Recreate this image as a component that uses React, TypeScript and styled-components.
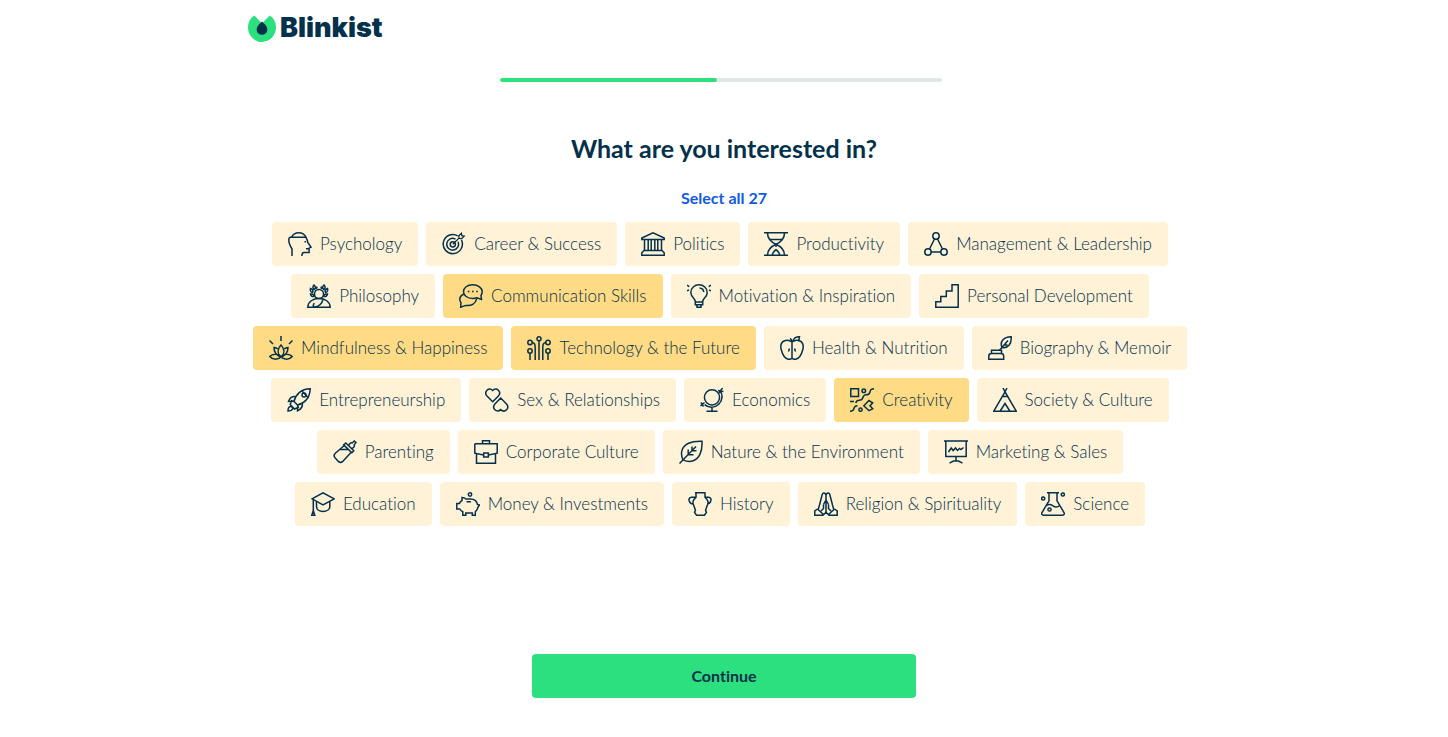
import React, { useState } from "react";
import styled, { createGlobalStyle } from "styled-components";

const ink = "#03314b";

const GlobalStyle = createGlobalStyle`
  *, *::before, *::after { box-sizing: border-box; }
  body {
    margin: 0;
    background: #fff;
    color: ${ink};
    font-family: Lato, "Liberation Sans", sans-serif;
    font-variant-ligatures: none;
  }
  button { font-family: inherit; font-variant-ligatures: inherit; cursor: pointer; }
`;

const Page = styled.div`
  width: 100%;
  max-width: 952px;
  margin: 0 auto;
`;

const Header = styled.header`
  display: flex;
  align-items: center;
  height: 56px;
`;

const Brand = styled.a`
  display: flex;
  align-items: center;
  gap: 4px;
  color: ${ink};
  font-family: Inter, Lato, sans-serif;
  font-size: 27px;
  line-height: 32px;
  font-weight: 900;
  text-decoration: none;
`;

const Main = styled.main`
  display: flex;
  flex-direction: column;
  align-items: center;
  padding-top: 22px;
`;

const ProgressSlot = styled.div`
  width: 100%;
  max-width: 448px;
  padding-right: 6px;
`;

const Track = styled.div`
  height: 4px;
  border-radius: 2px;
  background: #e1e6e9;
  overflow: hidden;
`;

const Fill = styled.div`
  height: 100%;
  border-radius: 2px;
  background: #2ce080;
`;

const Title = styled.h1`
  margin: 50px 0 0;
  font-size: 25px;
  line-height: 32px;
  font-weight: 700;
  text-align: center;
`;

const SelectAll = styled.button`
  margin-top: 24px;
  padding: 0;
  border: 0;
  background: none;
  color: #0f5be0;
  font-size: 16px;
  line-height: 20px;
  font-weight: 700;
`;

const Chips = styled.div`
  display: flex;
  flex-direction: column;
  gap: 8px;
  width: 100%;
  padding-right: 8px;
  margin-top: 14px;
`;

const ChipRow = styled.div`
  display: flex;
  flex-wrap: wrap;
  justify-content: center;
  gap: 8px;
`;

const Chip = styled.button<{ $selected: boolean }>`
  display: flex;
  align-items: center;
  gap: 8px;
  height: 44px;
  padding: 0 16px;
  border: 0;
  border-radius: 4px;
  background: ${(p) => (p.$selected ? "#ffdb85" : "#fff2d7")};
  color: ${ink};
  font-size: 17px;
  line-height: 24px;
  font-weight: 300;
  white-space: nowrap;
`;

const Glyph = styled.svg`
  flex: none;
  width: 24px;
  height: 24px;
  fill: none;
  stroke: ${ink};
  stroke-width: 1.5;
`;

const Continue = styled.button`
  width: 100%;
  max-width: 384px;
  height: 44px;
  margin: 128px 0 32px;
  border: 0;
  border-radius: 4px;
  background: #2ce080;
  color: ${ink};
  font-size: 16px;
  line-height: 24px;
  font-weight: 700;
`;

type Topic = { name: string; icon: React.ReactNode };

const rows: Topic[][] = [
  [
    {
      name: "Psychology",
      icon: (
        <>
          <path d="M4 24v-7C1.8 13.500.8 11 .8 8.300.8 6.500 1.300 5.300 2.500 5.300H18c1.200 2 1.600 3.700 1.800 5.200l3.300 4.700-2 1v4.300h-5.200c-1.500 0-2 1-2 3.500" />
          <path d="M3.500 5.300C5 2.300 7.700.8 10.800.8S16.500 2.300 18 5.300M18 16.800h3" />
          <path d="M16.500 9.800h1.500" />
        </>
      ),
    },
    {
      name: "Career & Success",
      icon: (
        <>
          <path d="M15.700 3.800A9.600 9.600 0 1 0 19.500 8M13.500 7.100A5.900 5.900 0 1 0 16 9.800" />
          <circle cx="10.800" cy="12.300" r="2.600" />
          <path d="M10.800 12.300 17.500 5.600M16.700 4l2.700-2.700.5 2.300 2.300.5-2.700 2.700-2.300-.5z" strokeWidth="1.300" />
        </>
      ),
    },
    {
      name: "Politics",
      icon: (
        <>
          <path d="M.8 7.500V6L12 .8 23.200 6v1.500z" />
          <path d="M3.500 8v10M7.200 8v10M10.200 8v10M13.800 8v10M16.800 8v10M20.500 8v10" />
          <path d="M3 18.500h18l2.200 2.200v2.500H.8v-2.500z" />
        </>
      ),
    },
    {
      name: "Productivity",
      icon: (
        <>
          <path d="M0 .8h24M0 23.200h24M3.500 1c0 6 3.500 9 8.500 11.300S20.500 18 20.500 23M20.500 1c0 6-3.500 9-8.500 11.300S3.500 18 3.500 23" />
          <path d="M5.500 7.600h13M8.500 23c0-2 1.500-3.700 3.500-5.300 2 1.600 3.500 3.300 3.500 5.300M12 12v3" />
        </>
      ),
    },
    {
      name: "Management & Leadership",
      icon: (
        <>
          <circle cx="12" cy="4" r="3.200" />
          <circle cx="4" cy="20" r="3.200" />
          <circle cx="20" cy="20" r="3.200" />
          <path d="M10.500 7 5.500 17M13.500 7l5 10M7.300 20h9.400" />
        </>
      ),
    },
  ],
  [
    {
      name: "Philosophy",
      icon: (
        <>
          <circle cx="12" cy="10" r="4.500" />
          <path d="M.8 23.200C1 17.500 6 14.600 12 14.600s11 2.900 11.200 8.600zM16 15.300C15 20 12 22.500 7 23M6.500 23c-.3-1.500 0-3 .8-4" />
          <path d="M7.500 5.500C5.500 4.500 5.500 2.500 7 1c1.500 1.500 2 3 .5 4.500zM5.500 8.500c-2-.5-2.500-2-2-4 2 .5 3 2 2 4zM7 12.500c-2 .3-3.300-.7-3.500-2.500 2-.3 3.300.7 3.500 2.500zM16.500 5.500c2-1 2-3 .5-4.500-1.500 1.500-2 3-.5 4.500zM18.500 8.500c2-.5 2.500-2 2-4-2 .5-3 2-2 4zM17 12.500c2 .3 3.300-.7 3.500-2.500-2-.3-3.300.7-3.500 2.500zM9.500 5 10 2.500M14.500 5 14 2.500" />
        </>
      ),
    },
    {
      name: "Communication Skills",
      icon: (
        <>
          <path d="M22 11.500l.5 4-4.700-1.700c-1.200.5-2.600.7-4 .7-5.400 0-9.300-3-9.300-6.900S8.300.8 13.700.8s9.500 3 9.500 6.800c0 1.400-.4 2.700-1.200 3.900z" />
          <path d="M4.800 10C2.200 11.200.8 13 .8 15.200c0 1.300.4 2.500 1.200 3.500l-.3 4.500 5-1.800c5.300.8 10-1.500 11-6.700" />
          <path d="M8.800 7.500h1.600M13 7.500h1.600M17.200 7.500h1.600" />
        </>
      ),
    },
    {
      name: "Motivation & Inspiration",
      icon: (
        <>
          <path d="M8.300 18c0-2.300-.8-3-2-4.200A8.200 8.200 0 0 1 3.800 8.500C3.800 4 7.500.8 12 .8S20.200 4 20.200 8.500c0 2.200-1 3.900-2.500 5.300-1.200 1.200-2 1.900-2 4.200zM8.300 18v2.700h7.400V18M10 21v2.200h4V21" />
          <path d="M12.500 4c2.500.2 4 1.700 4.300 4M0 1l2.300 1.700M0 6.700l2-.7M24 1l-2.300 1.700M24 6.700 22 6" />
        </>
      ),
    },
    { name: "Personal Development", icon: <path d="M.8 23.200v-5.400h5v-5.400h5.500V7H17V.8h6.200v22.400z" /> },
  ],
  [
    {
      name: "Mindfulness & Happiness",
      icon: (
        <>
          <path d="M12 0v5M.5 4.500 4 8M23.500 4.500 20 8M12 9c-3.500 3.500-3.800 8-.8 11.500h1.600C15.800 17 15.500 12.500 12 9z" />
          <path d="M9 13c-1.500-1-2.500-1.300-4-1.500 0 3.500 1.500 7 6 9M15 13c1.500-1 2.500-1.300 4-1.500 0 3.500-1.500 7-6 9M12 20.700c-2.500-3.200-8.500-3.500-11.200-.2 2.700 3.500 8.700 3.500 11.200.2zM12 20.700c2.500-3.200 8.500-3.500 11.200-.2-2.700 3.500-8.700 3.500-11.200.2z" />
        </>
      ),
    },
    {
      name: "Technology & the Future",
      icon: (
        <>
          <circle cx="12" cy="2.800" r="2" />
          <circle cx="3" cy="6.500" r="2.200" />
          <circle cx="21" cy="6.500" r="2.200" />
          <circle cx="3" cy="15" r="2.200" />
          <circle cx="21" cy="15" r="2.200" />
          <path d="M12 5v19M3 17.200V24M21 17.200V24M5.200 6.500C7.200 6.800 8.200 8.300 8.200 11v13M18.800 6.500c-2 .3-3 1.800-3 4.500v13" />
        </>
      ),
    },
    {
      name: "Health & Nutrition",
      icon: (
        <>
          <path d="M12 6C9.500 4.200 6.500 3.700 4 5 1.200 6.500.3 10 1.200 13.500 2.300 18 5 22.500 8.300 23.200c1.500.3 2.500-.6 3.700-.6s2.200.9 3.700.6c3.300-.7 6-5.200 7.100-9.700.9-3.500 0-7-2.800-8.500-2.500-1.300-5.500-.8-8 1zM12 6v16.500" />
          <path d="M12 6c0-1.500-.7-2.700-2-3.500M13 5.500C13.500 2.500 16 .8 19.500.8c0 2-.7 3.400-1.700 4M9.500 12.500 8.500 15.500M14.500 12.500l1 3" />
        </>
      ),
    },
    {
      name: "Biography & Memoir",
      icon: (
        <>
          <path d="M3.500 17.500v-3.200h10v3.200M.8 23.200v-3c0-1.700 1-2.700 2.700-2.700h9.500c1.700 0 2.700 1 2.700 2.700v3z" />
          <path d="M11.500 14.300 20 4.500M14 11.500C11.500 5.500 15.500 1 23.200.8 23.700 8 20 12.500 14 11.500zM16.500 9h3" />
        </>
      ),
    },
  ],
  [
    {
      name: "Entrepreneurship",
      icon: (
        <>
          <path d="M7 13.500C8.500 6.500 14 1 23.200.8 23 10 17.500 15.500 10.500 17z" />
          <circle cx="17" cy="7" r="2" />
          <path d="M9 8.700c-3-.5-6 .8-7.500 4.800L7 13.300M15.300 15c.5 3-.8 6-4.800 7.800l.2-5.800M5 12l-1.800 4.500L7.500 21l4.500-2M1 23c0-2.500.7-4.300 2.500-4.500C5.500 18.300 6 20 5.500 21 5 22.300 3.300 23 1 23zM14.500 2.500l7 7.500" />
        </>
      ),
    },
    {
      name: "Sex & Relationships",
      icon: (
        <>
          <path d="M7.700 13.700 2 8C.5 6.300.4 3.800 2 2.200s4-1.600 5.700.2c1.700-1.800 4.100-1.800 5.700-.2s1.500 4.100 0 5.800z" />
          <path d="M15.700 10l-5.800 6c-1.500 1.700-1.500 4.200 0 5.800s4 1.600 5.800-.2c1.800 1.800 4.200 1.800 5.800.2s1.500-4.100 0-5.800z" />
        </>
      ),
    },
    {
      name: "Economics",
      icon: (
        <>
          <circle cx="12" cy="9.300" r="7.600" />
          <path d="M19.700 2.200c3.400 4.200 3 10.200-.9 14-3.900 3.800-10.200 4-14.200.4M19 5l3.500-5M18 2.500l5.500 1M4.500 14.500.5 18M1 14.500l2.500 4M12 19v4M6.500 23.200h11" />
        </>
      ),
    },
    {
      name: "Creativity",
      icon: (
        <>
          <path d="M.8.800h7.700V8.500H.8z" />
          <circle cx="13.800" cy="2.800" r="1.800" />
          <circle cx="10.500" cy="21.700" r="1.600" />
          <path d="M24 .8c-3 0-3.700 1-4 3s-1.500 3-3.800 3-3 1.500-3.400 3-1.600 2.500-3.600 2.500-3 1.200-3.400 2.700M0 13.500h4M0 23.200c3 0 3.700-1 4-2.800s1.300-2.400 3.500-2.600" />
          <path d="M13.800 17.700l5.200-5.200 3.700 2.300-2.700 3 2.700 3-3.700 1.900z" />
        </>
      ),
    },
    {
      name: "Society & Culture",
      icon: <path d="M10 0l2 3.800L14 0M12 3.800.8 23.200h22.400zM9.500 8.500h5M7.200 23l4.800-7.500 4.800 7.500" />,
    },
  ],
  [
    {
      name: "Parenting",
      icon: (
        <>
          <path d="M11.300 5.500 2.300 13.300c-1.400 1.300-1.500 3-.3 4.400l3.400 3.700c1.300 1.300 3 1.300 4.300 0l8.300-9" />
          <path d="M10.700 4.900 12.800 3l8 7.700-2 2zM16 5.300c.2-1.800 1.700-2.800 3.200-2.300L21.300 1 23 2.600l-1.800 2.200c.5 1.500-.3 3-2.200 3.500M7 9.500l8.500-.3" />
        </>
      ),
    },
    {
      name: "Corporate Culture",
      icon: (
        <>
          <path d="M.8 3.800h22.400v9.400L14.500 15M9.500 15 .8 13.200V3.800M2.500 14v9.200h19V14M8.500 3.500V.8h7v2.700" />
          <path d="M9.700 13h4.600v4H9.700z" />
        </>
      ),
    },
    {
      name: "Nature & the Environment",
      icon: (
        <>
          <path d="M4 19.800C1 13.500 2.500 6.500 9.500 3.200 13 1.600 17.500 1 23 1.200c.3 5.500-.4 10-2.200 13.500C17.500 21.500 10.500 23 4 19.800z" />
          <path d="M.5 23.500 17 6.500M13 10.500V6.500M9.200 14.500V9.500M13 10.700h4.500M9 14.700h5.500" />
        </>
      ),
    },
    {
      name: "Marketing & Sales",
      icon: (
        <>
          <path d="M0 1h24M1.800 1v15.500h20.400V1M12 16.500v4.500M5.500 23.200l4-2.200h5l4 2.200" />
          <path d="M4.500 12l2.700-4 2 2.500L11.500 8l2 2.500 2-2 1.500 1 2.500-2" />
        </>
      ),
    },
  ],
  [
    {
      name: "Education",
      icon: (
        <>
          <path d="M1 6.800 12 .8l11.200 6L12 13z" />
          <path d="M5.500 9.500v5c0 3.200 3 5 6.500 5s6.800-1.800 6.800-5v-5M2.300 7.500V19M2.300 18.500.8 23.200h3z" />
        </>
      ),
    },
    {
      name: "Money & Investments",
      icon: (
        <>
          <circle cx="14" cy="2.500" r="1.700" />
          <path d="M6 5.500v3C4.500 9.300 3.800 10.300 3.500 11.500H.8V17h3c.7 1.300 1.700 2.200 3 2.800v3.400h3V21h6.500v2.200h3v-3.400c1.500-1.200 2.200-2.700 2.500-4.300l1.700-2.500-2-.5c-.7-3.500-3.500-5.500-7-5.500H10C9 6 7.500 5.500 6 5.500zM10.500 9.800H15" />
        </>
      ),
    },
    {
      name: "History",
      icon: (
        <path d="M7 .8h10.500M8 .8v4.400L6 7.500c-1.500 2-1.500 4 0 6.500l1.500 4.500-1 1.700 2 3h8l2-3-1-1.700 1.500-4.500c1.500-2.500 1.500-4.500 0-6.500l-2-2.300V.8M8 5.200H3.500C1.500 5.500.5 7 1.200 9s2.300 3 4 3M17 5.200h3.500c2 .3 3 1.800 2.300 3.800s-2.100 3-3.800 3" />
      ),
    },
    {
      name: "Religion & Spirituality",
      icon: (
        <>
          <path d="M12 8v14M12 3c-.7-2.200-3-2.700-3.800-.5L5.500 13 4.200 17.500M12 3c.7-2.200 3-2.700 3.800-.5L18.500 13l1.300 4.500M12 3v5M9.500 12.500 12 8l2.500 4.500" />
          <path d="M3.500 17 .8 19v4.200H9l3-3 3 3h8.200V19l-2.700-2M3.500 17l6 5.500M20.500 17l-6 5.500M9.500 12.500v4L7 19M14.500 12.500v4L17 19" />
        </>
      ),
    },
    {
      name: "Science",
      icon: (
        <>
          <path d="M6 .8h12M8 .8v8L1 20.500c-.8 1.500 0 2.700 1.500 2.700h19c1.500 0 2.300-1.200 1.500-2.700L16 8.800v-8M5 13.800c2.500-1.800 4.800-1.500 7 0s4.500 1.500 6.800-.3" />
          <circle cx="2.200" cy="6.500" r="1.600" />
          <circle cx="21.800" cy="2.500" r="1.600" />
          <circle cx="8.500" cy="17.500" r="1.600" />
        </>
      ),
    },
  ],
];

const topics = rows.flat();
const initial = ["Communication Skills", "Mindfulness & Happiness", "Technology & the Future", "Creativity"];

export default function App() {
  const [selected, setSelected] = useState<string[]>(initial);
  const toggle = (name: string) =>
    setSelected((s) => (s.includes(name) ? s.filter((n) => n !== name) : [...s, name]));
  const progress = 49;

  return (
    <>
      <GlobalStyle />
      <Page>
        <Header>
          <Brand href="#">
            <svg width="28" height="28" viewBox="0 0 28 28" aria-hidden="true">
              <path d="M6.300 1.500 14 9.200l7.700-7.700A14 14 0 0 1 28 13.600C28 21.500 21.700 28 14 28S0 21.500 0 13.600A14 14 0 0 1 6.300 1.500z" fill="#2ce080" />
              <path d="M14 7.600c2.700 2.600 5.400 4.800 5.400 7.800a5.400 5.400 0 0 1-10.800 0c0-3 2.700-5.200 5.400-7.800z" fill={ink} />
            </svg>
            Blinkist
          </Brand>
        </Header>
        <Main>
          <ProgressSlot>
            <Track role="progressbar" aria-label="Progress" aria-valuenow={progress} aria-valuemin={0} aria-valuemax={100}>
              <Fill style={{ width: `${progress}%` }} />
            </Track>
          </ProgressSlot>
          <Title>What are you interested in?</Title>
          <SelectAll type="button" onClick={() => setSelected(topics.map((t) => t.name))}>
            Select all {topics.length}
          </SelectAll>
          <Chips>
            {rows.map((row) => (
              <ChipRow key={row[0].name}>
                {row.map((t) => {
                  const on = selected.includes(t.name);
                  return (
                    <Chip key={t.name} type="button" $selected={on} aria-pressed={on} onClick={() => toggle(t.name)}>
                      <Glyph viewBox="0 0 24 24" aria-hidden="true">{t.icon}</Glyph>
                      {t.name}
                    </Chip>
                  );
                })}
              </ChipRow>
            ))}
          </Chips>
          <Continue type="button">Continue</Continue>
        </Main>
      </Page>
    </>
  );
}
